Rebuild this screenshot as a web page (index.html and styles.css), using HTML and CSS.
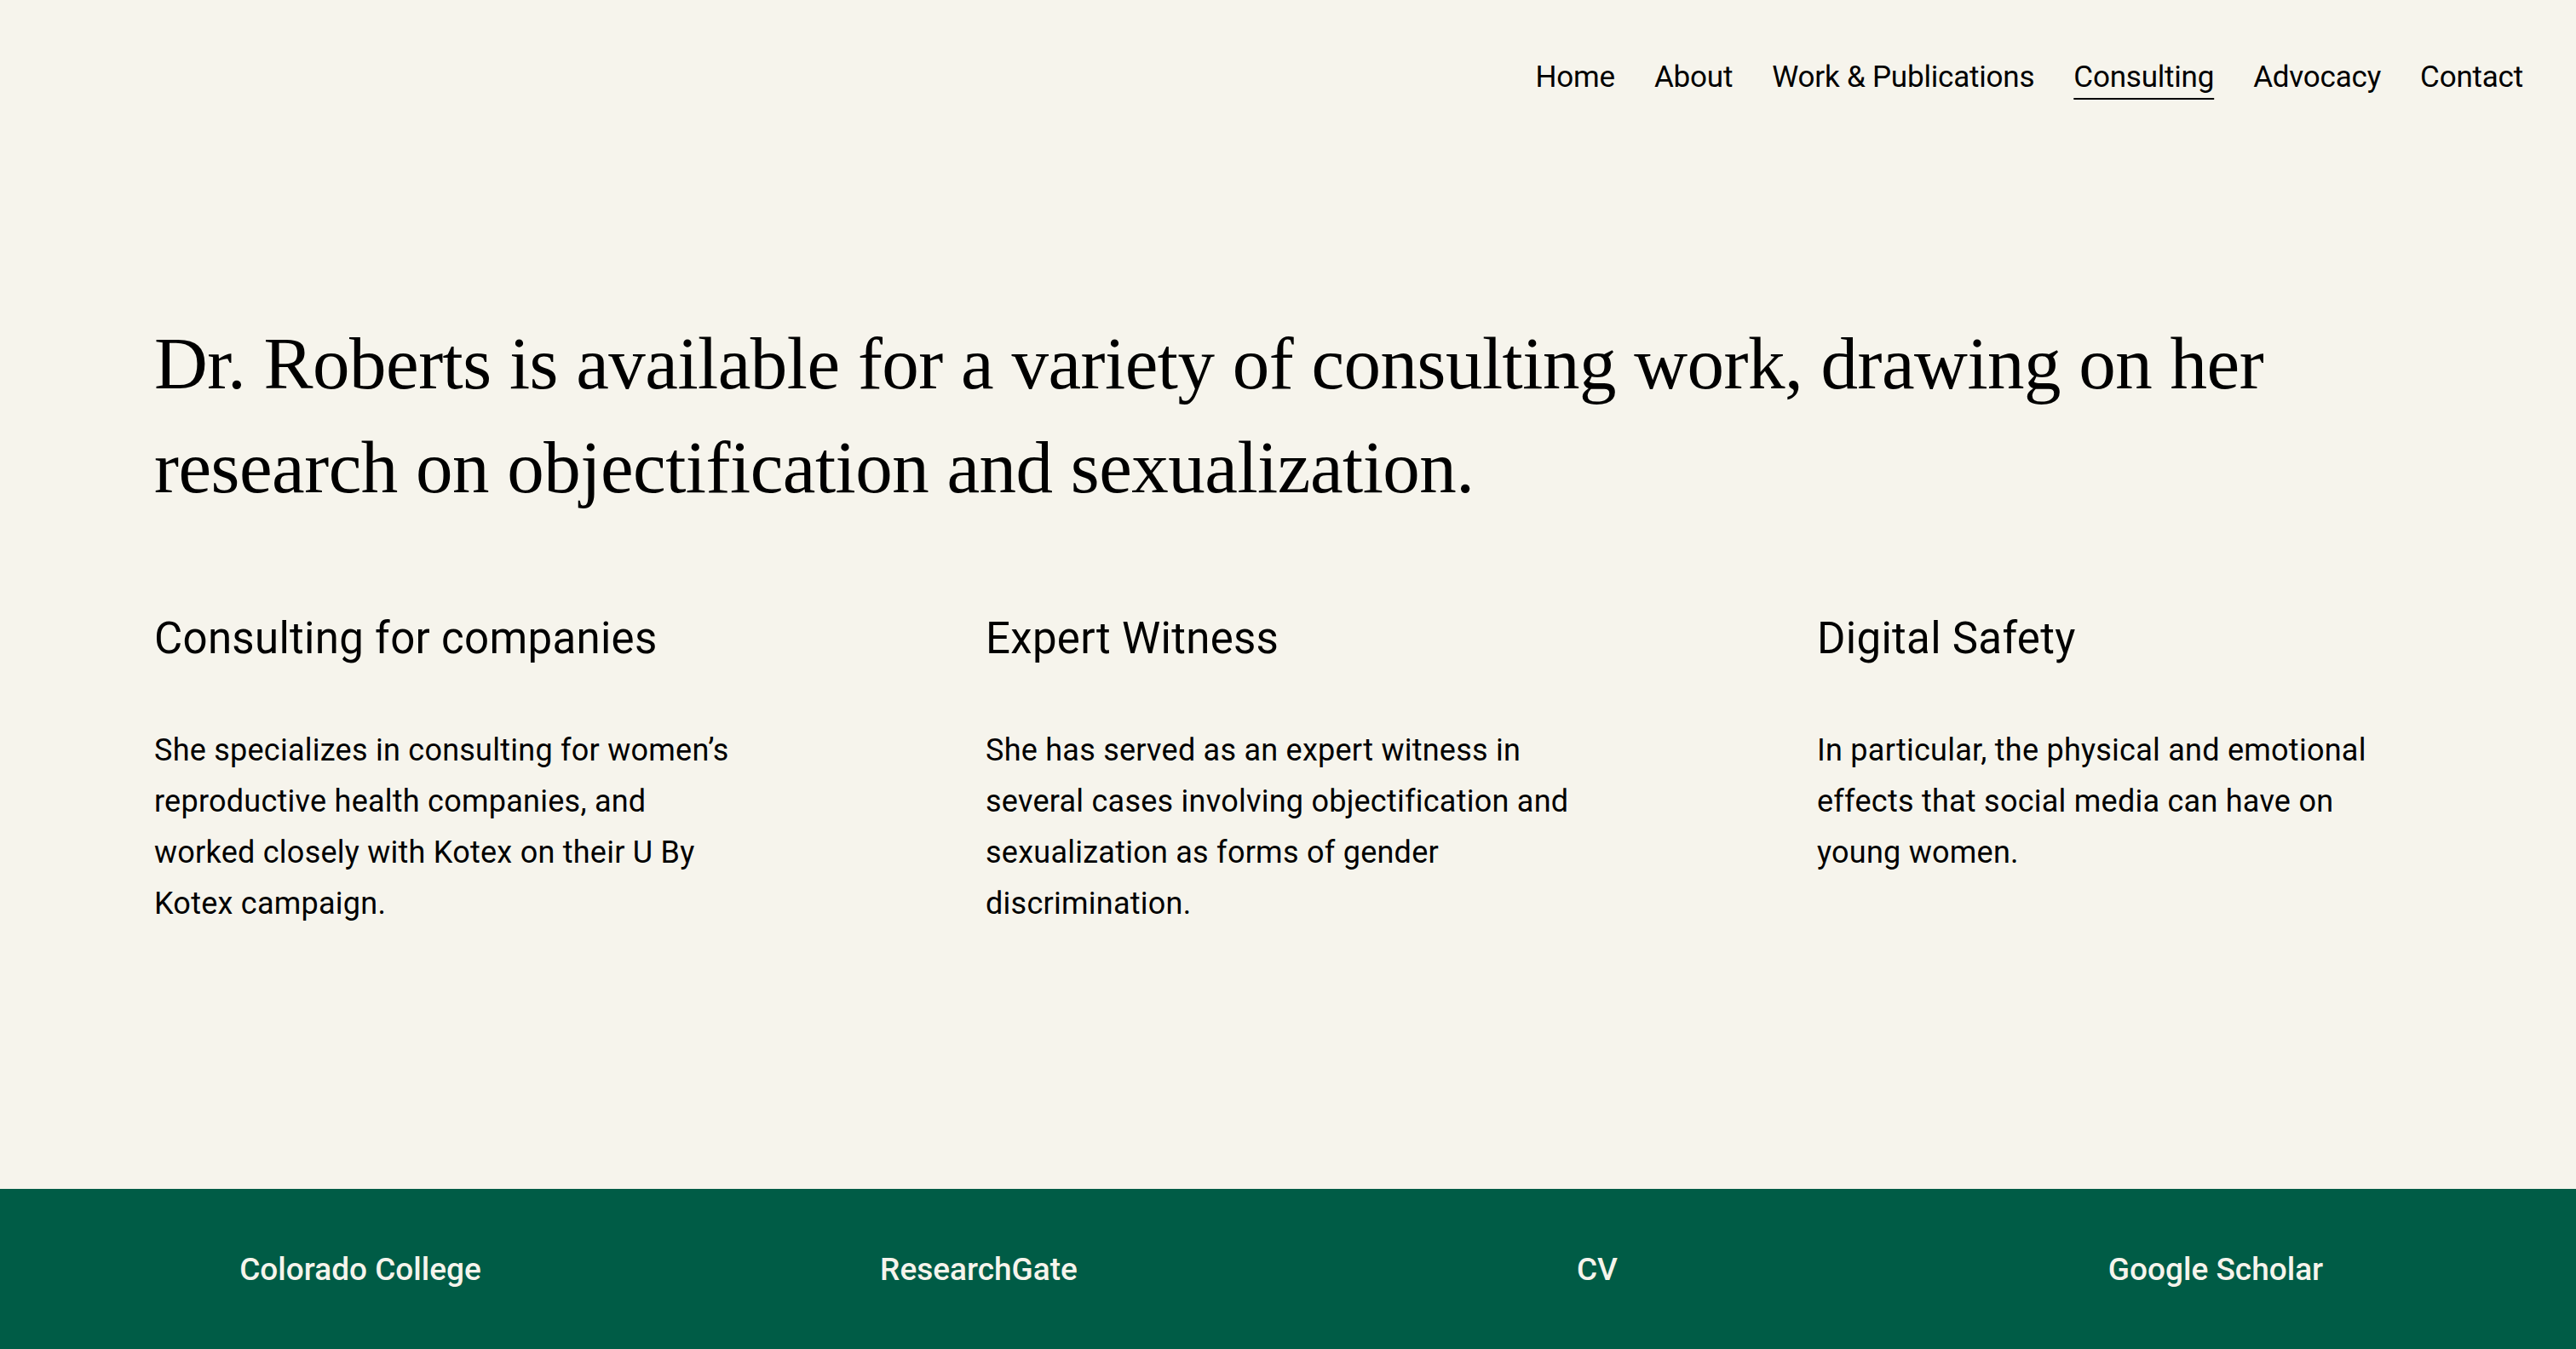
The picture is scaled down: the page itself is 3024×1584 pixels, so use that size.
FILE: index.html
```html
<!DOCTYPE html>
<html lang="en">
<head>
<meta charset="utf-8">
<title>Consulting — Dr. Roberts</title>
<link rel="stylesheet" href="styles.css">
</head>
<body>
<div class="page">
  <header class="site-header">
    <nav class="main-nav">
      <a href="#" class="nav-link">Home</a>
      <a href="#" class="nav-link">About</a>
      <a href="#" class="nav-link">Work &amp; Publications</a>
      <a href="#" class="nav-link active">Consulting</a>
      <a href="#" class="nav-link">Advocacy</a>
      <a href="#" class="nav-link">Contact</a>
    </nav>
  </header>

  <main class="content">
    <h1 class="hero-title">Dr. Roberts is available for a variety of consulting work, drawing on her<br>research on objectification and sexualization.</h1>

    <section class="services">
      <article class="service">
        <h2 class="service-title">Consulting for companies</h2>
        <p class="service-text">She specializes in consulting for women’s reproductive health companies, and worked closely with Kotex on their U By Kotex campaign.</p>
      </article>
      <article class="service">
        <h2 class="service-title">Expert Witness</h2>
        <p class="service-text">She has served as an expert witness in several cases involving objectification and sexualization as forms of gender discrimination.</p>
      </article>
      <article class="service">
        <h2 class="service-title">Digital Safety</h2>
        <p class="service-text">In particular, the physical and emotional effects that social media can have on young women.</p>
      </article>
    </section>
  </main>

  <footer class="site-footer">
    <a href="#" class="footer-link">Colorado College</a>
    <a href="#" class="footer-link">ResearchGate</a>
    <a href="#" class="footer-link">CV</a>
    <a href="#" class="footer-link">Google Scholar</a>
  </footer>
</div>
</body>
</html>
```

FILE: styles.css
```css
* {
  box-sizing: border-box;
}

html, body {
  margin: 0;
  padding: 0;
}

body {
  background: #f6f4ec;
  color: #000;
  font-family: Roboto, "Liberation Sans", sans-serif;
}

.page {
  min-height: 100vh;
  display: flex;
  flex-direction: column;
}

.site-header {
  padding: 70px 62px 0 62px;
}

.main-nav {
  display: flex;
  justify-content: flex-end;
  gap: 46px;
}

.nav-link {
  color: #000;
  text-decoration: none;
  font-size: 35px;
  line-height: 41px;
  font-weight: 400;
  letter-spacing: -0.2px;
}

.nav-link.active {
  text-decoration: underline;
  text-decoration-thickness: 2px;
  text-underline-offset: 13px;
}

.content {
  flex: 1;
  padding: 0 181px;
}

.hero-title {
  margin: 255px 0 0 0;
  font-family: "Liberation Serif", "DejaVu Serif", serif;
  font-weight: 400;
  font-size: 87px;
  line-height: 122px;
  letter-spacing: -0.5px;
}

.services {
  display: grid;
  grid-template-columns: repeat(3, 1fr);
  column-gap: 266px;
  margin-top: 110px;
}

.service-title {
  margin: 0;
  font-size: 51px;
  line-height: 60px;
  font-weight: 400;
  letter-spacing: 0.3px;
}

.service-text {
  max-width: 695px;
  margin: 71px 0 0 0;
  font-size: 36px;
  line-height: 60px;
  font-weight: 400;
  letter-spacing: 0.25px;
}

.site-footer {
  background: #005c46;
  height: 188px;
  padding: 0 60px;
  display: grid;
  grid-template-columns: repeat(4, 1fr);
  align-items: center;
  justify-items: center;
}

.footer-link {
  color: #f6f4ec;
  text-decoration: none;
  font-size: 37px;
  font-weight: 500;
  letter-spacing: 0;
}
```
